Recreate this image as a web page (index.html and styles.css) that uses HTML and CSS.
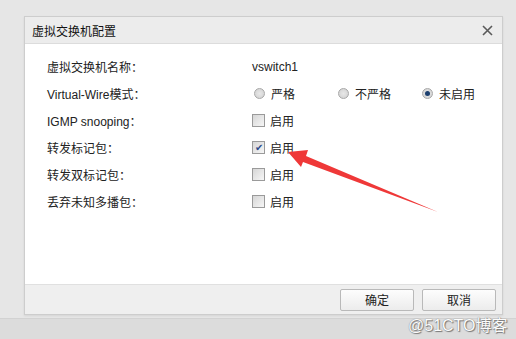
FILE: index.html
```html
<!DOCTYPE html>
<html lang="zh-CN">
<head>
    <meta charset="UTF-8">
    <title>虚拟交换机配置</title>
    <link rel="stylesheet" href="styles.css">
</head>
<body>
    <div class="page">
        <div class="dialog">
            <div class="dialog-title">
                <span>虚拟交换机配置</span>
                <svg class="close" width="11" height="11" viewBox="0 0 11 11">
                    <path d="M1 1L10 10M10 1L1 10" stroke="#5a5a5a" stroke-width="1.6"/>
                </svg>
            </div>
            <div class="dialog-body">
                <div class="row">
                    <div class="label">虚拟交换机名称：</div>
                    <div class="value">vswitch1</div>
                </div>
                <div class="row">
                    <div class="label">Virtual-Wire模式：</div>
                    <div class="value radios">
                        <label class="opt"><span class="radio"></span>严格</label>
                        <label class="opt"><span class="radio"></span>不严格</label>
                        <label class="opt"><span class="radio on"></span>未启用</label>
                    </div>
                </div>
                <div class="row">
                    <div class="label">IGMP snooping：</div>
                    <div class="value"><label class="opt"><span class="check"></span>启用</label></div>
                </div>
                <div class="row">
                    <div class="label">转发标记包：</div>
                    <div class="value"><label class="opt"><span class="check on">&#x2714;</span>启用</label></div>
                </div>
                <div class="row">
                    <div class="label">转发双标记包：</div>
                    <div class="value"><label class="opt"><span class="check"></span>启用</label></div>
                </div>
                <div class="row">
                    <div class="label">丢弃未知多播包：</div>
                    <div class="value"><label class="opt"><span class="check"></span>启用</label></div>
                </div>
            </div>
            <div class="dialog-footer">
                <button class="btn">确定</button>
                <button class="btn">取消</button>
            </div>
        </div>
        <div class="bottom-band"></div>
    </div>

    <svg class="arrow" width="516" height="339" viewBox="0 0 516 339">
        <polygon points="288,152 308,150 306,156 438,212 303,162 301,167" fill="#ef3838"/>
    </svg>
    <div class="watermark">@51CTO博客</div>
</body>
</html>
```

FILE: styles.css
```css
body {
    margin: 0;
    width: 516px;
    height: 339px;
    overflow: hidden;
    background-color: #e6e6e6;
    font-family: "Liberation Sans", "Noto Sans CJK SC", sans-serif;
    font-size: 12px;
    color: #222;
}

.page {
    padding: 16px 0 0 24px;
}

.dialog {
    width: 477px;
    border: 1px solid #cdcdcd;
    background-color: #fff;
    box-shadow: 0 1px 2px rgba(0, 0, 0, 0.08);
}

.dialog-title {
    height: 26px;
    display: flex;
    align-items: center;
    justify-content: space-between;
    padding: 0 9px 0 7px;
    background-color: #ececec;
    border-bottom: 1px solid #dcdcdc;
    font-size: 12px;
    color: #111;
}

.dialog-body {
    height: 231px;
    padding: 9px 0 0 22px;
}

.row {
    display: flex;
    align-items: center;
    height: 27px;
}

.label {
    width: 205px;
    color: #222;
}

.value {
    display: flex;
    align-items: center;
}

.radios .opt {
    width: 80px;
    padding-left: 4px;
}

.opt {
    display: flex;
    align-items: center;
}

.radio {
    width: 9px;
    height: 9px;
    border: 1px solid #a8a8a8;
    border-radius: 50%;
    background: radial-gradient(circle, #e8e8e8 0, #cfcfcf 100%);
    margin-right: 6px;
    position: relative;
}

.radio.on::after {
    content: "";
    position: absolute;
    left: 2px;
    top: 2px;
    width: 5px;
    height: 5px;
    border-radius: 50%;
    background-color: #1c3f6e;
}

.check {
    width: 11px;
    height: 11px;
    border: 1px solid #9a9a9a;
    background: linear-gradient(135deg, #d6d6d6, #f6f6f6);
    margin-right: 5px;
    display: flex;
    align-items: center;
    justify-content: center;
    font-size: 10px;
    line-height: 1;
    color: #2b4a8a;
}

.dialog-footer {
    height: 29px;
    display: flex;
    align-items: center;
    justify-content: flex-end;
    gap: 8px;
    padding-right: 6px;
    background-color: #efefef;
    border-top: 1px solid #e0e0e0;
}

.btn {
    width: 74px;
    height: 22px;
    border: 1px solid #b9b9b9;
    border-radius: 2px;
    background: linear-gradient(#fdfdfd, #ececec);
    font-family: "Liberation Sans", "Noto Sans CJK SC", sans-serif;
    font-size: 12px;
    color: #222;
    padding: 0;
}

.bottom-band {
    height: 30px;
    margin-left: -24px;
    margin-top: 3px;
    background-color: #dcdcdc;
    border-top: 1px solid #d2d2d2;
}

.arrow {
    position: absolute;
    left: 0;
    top: 0;
}

.watermark {
    position: absolute;
    left: 408px;
    top: 312px;
    font-size: 16px;
    color: #fcfcfc;
    text-shadow: 0 0 1px #666, 1px 1px 1px #777;
}
```
